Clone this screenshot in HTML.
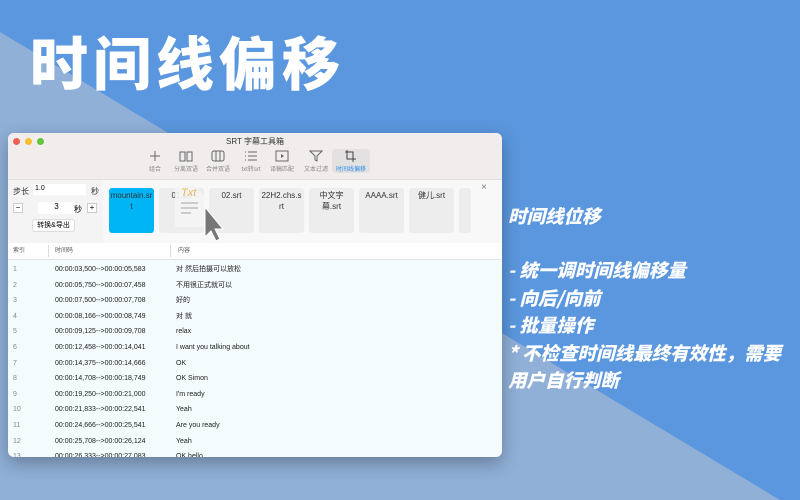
<!DOCTYPE html>
<html><head><meta charset="utf-8"><style>
*{margin:0;padding:0;box-sizing:border-box}
body{width:800px;height:500px;overflow:hidden;position:relative;font-family:"Liberation Sans","Noto Sans CJK SC",sans-serif;background:#5b97de}
.abs{position:absolute}
.title{left:30px;top:18px;font-size:58px;font-weight:900;color:#fff;letter-spacing:5px;font-family:"Noto Sans CJK SC",sans-serif}
.side{color:#fff;font-style:italic;font-weight:900;font-family:"Noto Sans CJK SC",sans-serif;font-size:18.5px}
.win{left:8px;top:133px;width:494px;height:324px;background:#f3fbfd;border-radius:6px;overflow:hidden;box-shadow:0 6px 18px rgba(0,0,0,.3)}
.tb{left:0;top:0;width:494px;height:47px;background:#f1eded;border-bottom:1px solid #e2dede}
.dot{width:7px;height:7px;border-radius:50%;top:5px}
.tool{top:17px;font-size:6px;color:#888;text-align:center;width:32px}
.tool svg{display:block;margin:0 auto 2px}
.card{top:55px;width:45px;height:45px;background:#ededed;border-radius:3px;font-size:8px;text-align:center;padding-top:2px;color:#333;line-height:11px}
.row{position:absolute;left:0;width:494px;height:15.6px;font-size:7px;color:#222;line-height:15.6px}
.row span{position:absolute}
</style></head><body>
<svg class="abs" style="left:0;top:0" width="800" height="500"><polygon points="0,32 780,500 0,500" fill="#90b0d8"/></svg>
<div class="abs title">时间线偏移</div>
<div class="abs side" style="left:508px;top:203px">时间线位移</div>
<div class="abs side" style="left:508px;top:257px;line-height:27.5px;white-space:nowrap">- 统一调时间线偏移量<br>- 向后/向前<br>- 批量操作<br>* 不检查时间线最终有效性，需要<br>用户自行判断</div>
<div class="abs win">
 <div class="abs tb"></div>
 <div class="abs dot" style="left:5px;background:#ee5f57"></div>
 <div class="abs dot" style="left:17px;background:#f5bd30"></div>
 <div class="abs dot" style="left:29px;background:#5fc63e"></div>
 <div class="abs" style="left:0;width:494px;top:3px;text-align:center;font-size:8px;color:#333">SRT 字幕工具箱</div>
 <div class="abs" style="left:324px;top:16px;width:38px;height:24px;background:#e3e1e2;border-radius:4px"></div>
 <div class="abs tool" style="left:131px"><svg width="12" height="12"><path d="M6 1v10M1 6h10" stroke="#666" fill="none"/></svg>组合</div>
 <div class="abs tool" style="left:162px"><svg width="14" height="12"><path d="M1 2h5v9H1zM8 2h5v9H8z" stroke="#666" fill="none"/></svg>分离双语</div>
 <div class="abs tool" style="left:194px"><svg width="14" height="12"><rect x="1" y="1" width="12" height="10" rx="2" stroke="#666" fill="none"/><path d="M5 1v10M9 1v10" stroke="#666"/></svg>合并双语</div>
 <div class="abs tool" style="left:227px"><svg width="14" height="12"><path d="M4 2h9M4 6h9M4 10h9M1 2h1M1 6h1M1 10h1" stroke="#666"/></svg>txt转srt</div>
 <div class="abs tool" style="left:258px"><svg width="14" height="12"><rect x="1" y="1" width="12" height="10" stroke="#666" fill="none"/><path d="M6 4l3 2-3 2z" fill="#666"/></svg>译稿匹配</div>
 <div class="abs tool" style="left:292px"><svg width="14" height="12"><path d="M1 1h12L8 6v5L6 10V6z" stroke="#666" fill="none"/></svg>文本过滤</div>
 <div class="abs tool" style="left:327px;color:#2f8ee8"><svg width="14" height="12"><path d="M3 0v9h9M1 2h8v10" stroke="#444" fill="none"/></svg>时间线偏移</div>
 <div class="abs" style="left:0;top:47px;width:95px;height:63px;background:#f5f4f4"></div>
 <div class="abs" style="left:95px;top:47px;width:370px;height:63px;background:#f8f8f8"></div>
 <div class="abs" style="left:465px;top:47px;width:29px;height:63px;background:#f8f8f8"></div>
 <div class="abs" style="left:5px;top:53px;font-size:8px;color:#333">步长</div>
 <div class="abs" style="left:25px;top:51px;width:53px;height:11px;background:#fff;font-size:7px;padding:1px 2px">1.0</div>
 <div class="abs" style="left:83px;top:53px;font-size:8px;color:#333">秒</div>
 <div class="abs" style="left:5px;top:70px;width:10px;height:10px;border:1px solid #ccc;background:#fff;font-size:8px;line-height:8px;text-align:center">−</div>
 <div class="abs" style="left:30px;top:69px;width:37px;height:12px;background:#fff;font-size:8px;text-align:center">3</div>
 <div class="abs" style="left:66px;top:71px;font-size:8px">秒</div>
 <div class="abs" style="left:79px;top:70px;width:10px;height:10px;border:1px solid #ccc;background:#fff;font-size:8px;line-height:8px;text-align:center">+</div>
 <div class="abs" style="left:24px;top:86px;width:43px;height:13px;background:#fff;border:1px solid #ddd;border-radius:3px;font-size:7px;text-align:center;line-height:11px">转换&amp;导出</div>
 <div class="abs card" style="left:101px;background:#00b5f5">mountain.sr<br>t</div>
 <div class="abs card" style="left:151px">01.srt</div>
 <div class="abs card" style="left:201px">02.srt</div>
 <div class="abs card" style="left:251px">22H2.chs.s<br>rt</div>
 <div class="abs card" style="left:301px">中文字<br>幕.srt</div>
 <div class="abs card" style="left:351px">AAAA.srt</div>
 <div class="abs card" style="left:401px">健儿.srt</div>
 <div class="abs card" style="left:451px;width:12px"></div>
 <div class="abs" style="left:473px;top:49px;font-size:10px;color:#777">×</div>
 <svg class="abs" style="left:165px;top:48px" width="60" height="65"><path d="M2 5h20l9 9v32H2z" fill="#f4f4f4" opacity=".9"/><text x="8" y="15" font-size="11" font-style="italic" fill="#e8b860" font-family="Liberation Sans">Txt</text><path d="M8 22h17M8 27h17M8 32h10" stroke="#ccc" stroke-width="2"/><path d="M32 26v30l6-6 5 10 4-2-5-10h8z" fill="#777" stroke="#fff"/></svg>
 <div class="abs" style="left:0;top:110px;width:494px;height:17px;background:#fff;border-bottom:1px solid #e5e5e5;font-size:6px;color:#555;line-height:17px"><span class="abs" style="left:5px">索引</span><span class="abs" style="left:47px">时间码</span><span class="abs" style="left:170px">内容</span></div>
 <div class="abs" style="left:40px;top:112px;width:1px;height:12px;background:#ddd"></div>
 <div class="abs" style="left:162px;top:112px;width:1px;height:12px;background:#ddd"></div>
 <div class="abs" style="left:0;top:129px;width:494px">
  <div class="row" style="top:0"><span style="left:5px;color:#888">1</span><span style="left:47px">00:00:03,500--&gt;00:00:05,583</span><span style="left:168px">对 然后拍摄可以放松</span></div>
  <div class="row" style="top:15.6px"><span style="left:5px;color:#888">2</span><span style="left:47px">00:00:05,750--&gt;00:00:07,458</span><span style="left:168px">不用很正式就可以</span></div>
  <div class="row" style="top:31.2px"><span style="left:5px;color:#888">3</span><span style="left:47px">00:00:07,500--&gt;00:00:07,708</span><span style="left:168px">好的</span></div>
  <div class="row" style="top:46.8px"><span style="left:5px;color:#888">4</span><span style="left:47px">00:00:08,166--&gt;00:00:08,749</span><span style="left:168px">对 就</span></div>
  <div class="row" style="top:62.4px"><span style="left:5px;color:#888">5</span><span style="left:47px">00:00:09,125--&gt;00:00:09,708</span><span style="left:168px">relax</span></div>
  <div class="row" style="top:78px"><span style="left:5px;color:#888">6</span><span style="left:47px">00:00:12,458--&gt;00:00:14,041</span><span style="left:168px">I want you talking about</span></div>
  <div class="row" style="top:93.6px"><span style="left:5px;color:#888">7</span><span style="left:47px">00:00:14,375--&gt;00:00:14,666</span><span style="left:168px">OK</span></div>
  <div class="row" style="top:109.2px"><span style="left:5px;color:#888">8</span><span style="left:47px">00:00:14,708--&gt;00:00:18,749</span><span style="left:168px">OK Simon</span></div>
  <div class="row" style="top:124.8px"><span style="left:5px;color:#888">9</span><span style="left:47px">00:00:19,250--&gt;00:00:21,000</span><span style="left:168px">I'm ready</span></div>
  <div class="row" style="top:140.4px"><span style="left:5px;color:#888">10</span><span style="left:47px">00:00:21,833--&gt;00:00:22,541</span><span style="left:168px">Yeah</span></div>
  <div class="row" style="top:156px"><span style="left:5px;color:#888">11</span><span style="left:47px">00:00:24,666--&gt;00:00:25,541</span><span style="left:168px">Are you ready</span></div>
  <div class="row" style="top:171.6px"><span style="left:5px;color:#888">12</span><span style="left:47px">00:00:25,708--&gt;00:00:26,124</span><span style="left:168px">Yeah</span></div>
  <div class="row" style="top:187.2px"><span style="left:5px;color:#888">13</span><span style="left:47px">00:00:26,333--&gt;00:00:27,083</span><span style="left:168px">OK hello</span></div>
 </div>
</div>
</body></html>
